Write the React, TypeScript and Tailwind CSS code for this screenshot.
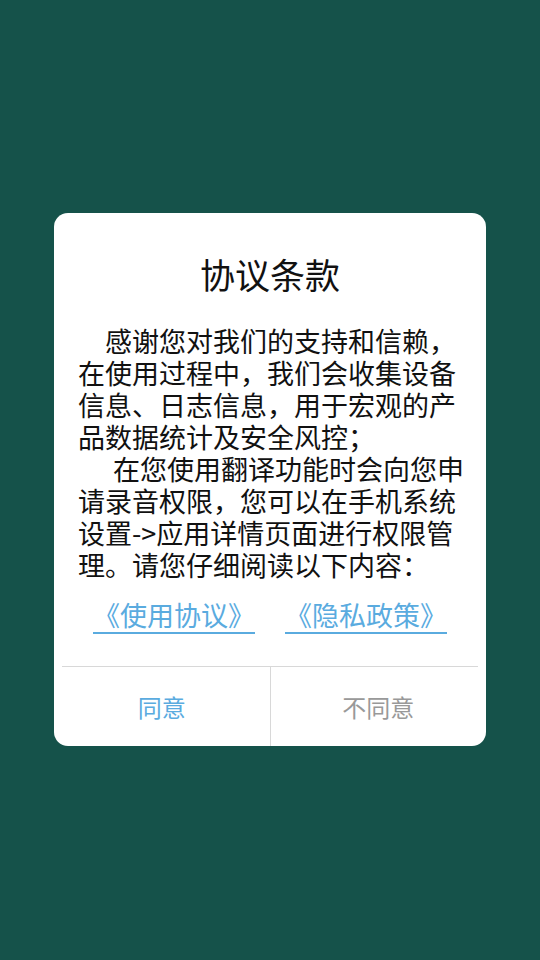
const bodyLines: { text: string; indent?: string }[] = [
  { text: "感谢您对我们的支持和信赖，", indent: "pl-[27px]" },
  { text: "在使用过程中，我们会收集设备" },
  { text: "信息、日志信息，用于宏观的产" },
  { text: "品数据统计及安全风控；" },
  { text: "在您使用翻译功能时会向您申", indent: "pl-[35px]" },
  { text: "请录音权限，您可以在手机系统" },
  { text: "设置->应用详情页面进行权限管" },
  { text: "理。请您仔细阅读以下内容：" },
];

export default function App() {
  return (
    <div
      className="flex h-[960px] w-[540px] items-start justify-center bg-[#15524a] pt-[213px]"
      style={{ fontFamily: '"Noto Sans CJK SC", "Noto Sans", sans-serif' }}
    >
      <div className="flex h-[533px] w-[432px] flex-col rounded-[14px] bg-white">
        <div className="mt-[41px] h-[40px] text-center text-[35px] leading-[40px] text-[#111]">
          协议条款
        </div>

        <div className="mt-[31px] px-[24px] text-[27px] leading-[32px] text-[#111]">
          {bodyLines.map((line, i) => (
            <div key={i} className={`whitespace-nowrap ${line.indent ?? ""}`}>
              {line.text}
            </div>
          ))}
        </div>

        <div className="mt-[14px] flex h-[40px] justify-center gap-[30px] text-[27px] leading-[40px] text-[#5aabdf]">
          <a className="underline decoration-[1.5px] underline-offset-[6px]">《使用协议》</a>
          <a className="underline decoration-[1.5px] underline-offset-[6px]">《隐私政策》</a>
        </div>

        <div className="mx-[8px] mt-[31px] h-px bg-[#d8d8d8]" />

        <div className="flex flex-1">
          <button className="flex-1 text-[24px] text-[#5aabdf]">同意</button>
          <div className="w-px bg-[#d8d8d8]" />
          <button className="flex-1 text-[24px] text-[#999999]">不同意</button>
        </div>
      </div>
    </div>
  );
}
